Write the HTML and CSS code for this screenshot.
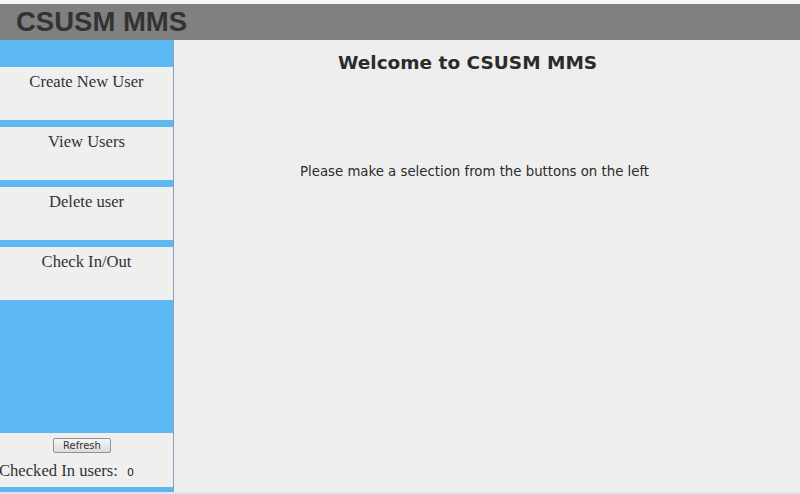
FILE: index.html
```html
<!DOCTYPE html>
<html>
<head>
<meta charset="utf-8">
<link rel="stylesheet" href="styles.css">
</head>
<body>
<div class="page">
  <header class="header"><h1 class="brand">CSUSM MMS</h1></header>
  <div class="main">
    <aside class="sidebar">
      <div class="nav">
        <div class="nav-btn">Create New User</div>
        <div class="nav-btn">View Users</div>
        <div class="nav-btn">Delete user</div>
        <div class="nav-btn">Check In/Out</div>
      </div>
      <div class="status">
        <button class="refresh">Refresh</button>
        <div class="checked"><span class="checked-label">Checked In users:</span><span class="count">0</span></div>
      </div>
    </aside>
    <section class="content">
      <h2 class="welcome">Welcome to CSUSM MMS</h2>
      <p class="hint">Please make a selection from the buttons on the left</p>
    </section>
  </div>
</div>
</body>
</html>
```
FILE: styles.css
```css
html, body {
  margin: 0;
  padding: 0;
  background: #eeeeee;
}
.page {
  width: 800px;
  height: 494px;
  padding-top: 4px;
  box-sizing: border-box;
  background: #f4f6f7;
  display: flex;
  flex-direction: column;
  border-bottom: 2px solid #dce5ef;
  overflow: hidden;
}
.header {
  height: 36px;
  background: #808080;
  display: flex;
  align-items: center;
  padding-left: 16px;
  flex: none;
}
.brand {
  margin: 0;
  font-family: "Liberation Sans", Arial, sans-serif;
  font-weight: bold;
  font-size: 27.5px;
  color: #333333;
  line-height: 1;
}
.main {
  flex: 1;
  display: flex;
  background: #eeeeee;
}
.sidebar {
  width: 173px;
  border-right: 1px solid #8a9fbd;
  background: #5db8f2;
  display: flex;
  flex-direction: column;
  padding-top: 27px;
  padding-bottom: 5px;
  flex: none;
}
.nav {
  display: flex;
  flex-direction: column;
  gap: 7px;
  flex: 1;
}
.nav-btn {
  height: 53px;
  background: #efefef;
  text-align: center;
  font-family: "Liberation Serif", "Times New Roman", serif;
  font-size: 16.6px;
  color: #333333;
  padding-top: 5px;
  box-sizing: border-box;
}
.status {
  height: 54px;
  background: #efefef;
  display: flex;
  flex-direction: column;
  align-items: center;
  padding-top: 5px;
  box-sizing: border-box;
}
.refresh {
  width: 58px;
  height: 15px;
  padding: 0;
  margin-left: -9px;
  font-family: "DejaVu Sans", Tahoma, sans-serif;
  font-size: 10px;
  color: #333;
  border: 1px solid #8e9399;
  border-radius: 2px;
  background: linear-gradient(#f6f6f6, #dcdcdc);
  line-height: 12px;
}
.checked {
  align-self: flex-start;
  margin-left: -1px;
  margin-top: 8px;
  display: flex;
  align-items: baseline;
}
.checked-label {
  font-family: "Liberation Serif", "Times New Roman", serif;
  font-size: 16.6px;
  color: #333;
}
.count {
  font-family: "DejaVu Sans", Tahoma, sans-serif;
  font-size: 11px;
  color: #222;
  margin-left: 9px;
}
.content {
  flex: 1;
  display: flex;
  flex-direction: column;
  padding-left: 125px;
}
.welcome {
  margin: 12px 0 0 39px;
  font-family: "DejaVu Sans", Tahoma, sans-serif;
  font-weight: bold;
  font-size: 18.5px;
  color: #2b2b2b;
}
.hint {
  margin: 91px 0 0 1px;
  font-family: "DejaVu Sans", Tahoma, sans-serif;
  font-size: 13.3px;
  color: #2b2b2b;
}
```
